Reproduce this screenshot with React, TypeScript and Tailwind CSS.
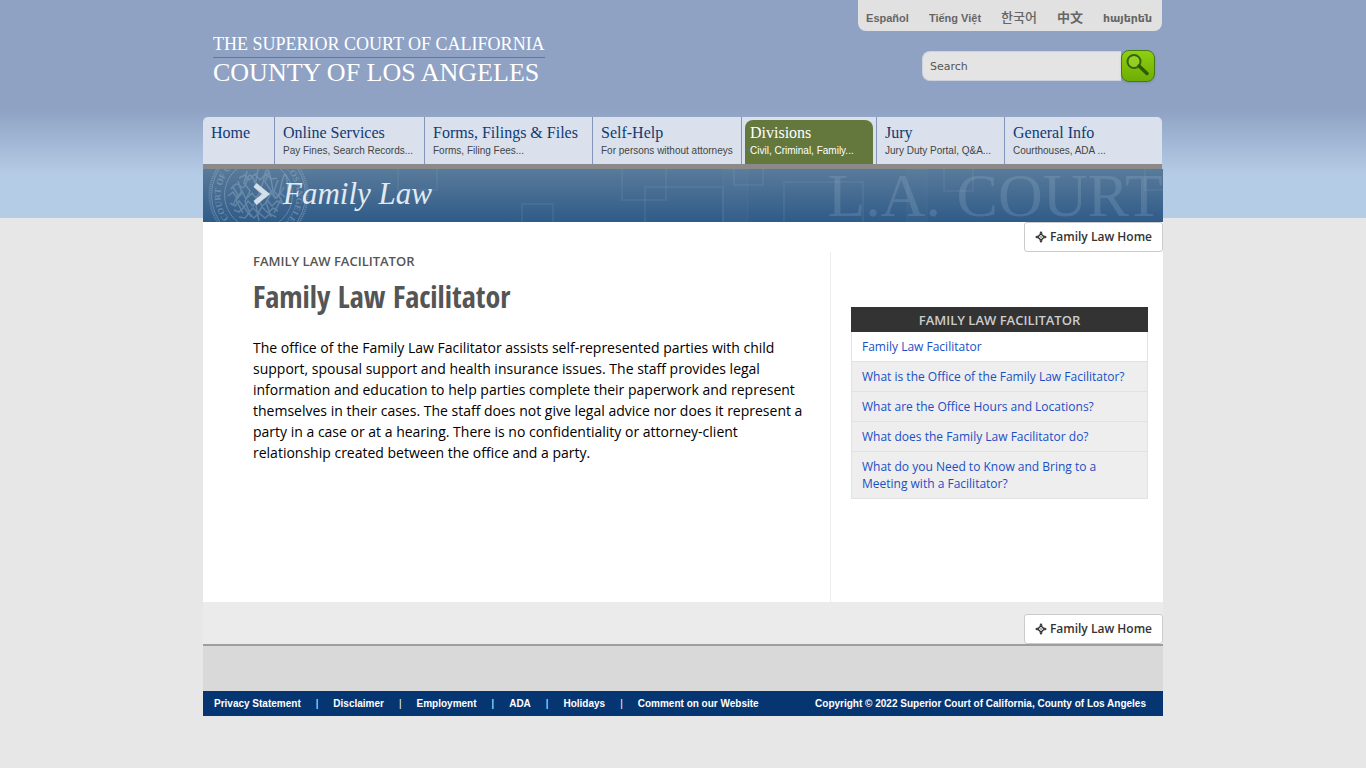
const languages = [
  { label: "Español", lang: "es", style: "text-[11px]" },
  { label: "Tiếng Việt", lang: "vi", style: "text-[11px]" },
  { label: "한국어", lang: "ko", style: "text-[13px] font-medium" },
  { label: "中文", lang: "zh", style: "text-[13px]" },
  { label: "հայերեն", lang: "hy", style: "text-[11px]" },
];

type NavItem = {
  title: string;
  note?: string;
  width: string;
  active?: boolean;
};

const navItems: NavItem[] = [
  { title: "Home", width: "w-[72px]" },
  { title: "Online Services", note: "Pay Fines, Search Records...", width: "w-[150px]" },
  { title: "Forms, Filings & Files", note: "Forms, Filing Fees...", width: "w-[168px]" },
  { title: "Self-Help", note: "For persons without attorneys", width: "w-[149px]" },
  { title: "Divisions", note: "Civil, Criminal, Family...", width: "w-[135px]", active: true },
  { title: "Jury", note: "Jury Duty Portal, Q&A...", width: "w-[128px]" },
  { title: "General Info", note: "Courthouses, ADA ...", width: "flex-1" },
];

const sideLinks = [
  "Family Law Facilitator",
  "What is the Office of the Family Law Facilitator?",
  "What are the Office Hours and Locations?",
  "What does the Family Law Facilitator do?",
  "What do you Need to Know and Bring to a Meeting with a Facilitator?",
];

const footerLinks = [
  "Privacy Statement",
  "Disclaimer",
  "Employment",
  "ADA",
  "Holidays",
  "Comment on our Website",
];

function SearchIcon() {
  return (
    <svg viewBox="0 0 34 32" className="h-8 w-[34px] shrink-0" aria-hidden="true">
      <circle cx="13" cy="11.500" r="6.500" fill="#a5da3a" fillOpacity="0.5" stroke="#356210" strokeWidth="2" />
      <path d="M18 16 L26 23.500" stroke="#2f5a0c" strokeWidth="3.500" strokeLinecap="round" />
    </svg>
  );
}

function CompassIcon() {
  return (
    <svg viewBox="0 0 12 12" className="h-3 w-3" fill="none" stroke="#333" aria-hidden="true">
      <path d="M6 2.800 L9.200 6 L6 9.200 L2.800 6 Z" strokeWidth="1.400" />
      <path d="M6 0 L7.800 2.600 H4.200 Z M12 6 L9.400 7.800 V4.200 Z M6 12 L4.200 9.400 H7.800 Z M0 6 L2.600 4.200 V7.800 Z" fill="#333" stroke="none" />
      <circle cx="6" cy="6" r="0.700" fill="#333" stroke="none" />
    </svg>
  );
}

function CourtSeal() {
  return (
    <svg viewBox="0 0 110 53" className="h-[53px] w-[110px]" fill="none" stroke="#a9c0d4" aria-hidden="true">
      <defs>
        <path id="seal-rim" d="M55.500 64 A38 38 0 1 1 55.600 64" />
      </defs>
      <g opacity="0.4">
        <circle cx="55.500" cy="26" r="49" strokeWidth="2" strokeDasharray="1 1" />
        <circle cx="55.500" cy="26" r="47" strokeWidth="1" />
        <circle cx="55.500" cy="26" r="34" strokeWidth="1" />
        <text fontSize="9" fontWeight="bold" fill="#a9c0d4" stroke="none" fontFamily="Liberation Serif, serif">
          <textPath href="#seal-rim" startOffset="34">
            COURT OF CALIFORNIA • LOS ANGELES
          </textPath>
        </text>
      </g>
      <g opacity="0.35" strokeWidth="1.500">
        <path d="M28 20 q5 -8 9 -3 t7 -6 t8 3 t9 -5 t8 7 t9 1 t7 5" />
        <path d="M25 27 l5 -4 l4 6 l5 -7 l4 8 l6 -6 l4 5 l5 -7 l4 7 l6 -6 l4 6 l5 -5 l5 4" />
        <path d="M27 34 l5 3 l4 -5 l5 6 l4 -6 l5 5 l5 -7 l4 7 l6 -5 l4 5 l5 -5 l6 3" />
        <path d="M31 41 l5 2 l5 -5 l4 6 l5 -5 l5 5 l4 -6 l6 6 l5 -5 l5 3" />
        <path d="M36 48 l6 1 l4 -5 l5 5 l5 -5 l6 5 l5 -4 l6 3" />
        <path d="M36 9 l6 -3 l4 5 l6 -6 l5 6 l6 -6 l5 5 l6 -1" />
        <path d="M44 2 L41 14 L47 22 L42 32 L48 48 M66 2 L62 13 L69 23 L63 33 L68 48 M55 0 L52 17 L58 26 L53 37 L56 52" />
        <path d="M35 12 L39 24 L33 31 L40 44 M75 11 L71 22 L78 30 L71 44 M30 18 L35 26 L30 36 M81 18 L76 27 L81 36" />
      </g>
    </svg>
  );
}

function BannerSquares() {
  return (
    <svg viewBox="0 0 960 53" className="h-[53px] w-[960px]" fill="none" stroke="#9db8cd" strokeOpacity="0.1" strokeWidth="2" aria-hidden="true">
      <path d="M195 0 V21 H234 V0 M419 -2 V31 H463 V-2 M531 -2 V16 H560 V-2 M942 -2 V21 H966 M741 -2 V22 H770 V-2" />
      <path d="M319 54 V35 H350 V54 M442 54 V18 H520 V54 M581 54 V13 H660 V54" />
      <path d="M520 0 H545 V53 H520 Z M704 0 H724 V53 H704 Z" fill="#9db8cd" fillOpacity="0.04" strokeOpacity="0.04" />
    </svg>
  );
}

function HomeButton() {
  return (
    <a
      href="#"
      className="flex h-[30px] items-center gap-[3px] rounded-[3px] border border-[#ccc] bg-white px-2.5 font-['Open_Sans',sans-serif] text-xs font-semibold text-[#333]"
    >
      <CompassIcon />
      Family Law Home
    </a>
  );
}

function Header() {
  return (
    <header className="flex h-[117px] justify-between">
      <a href="#" className="mt-[34px] ml-2.5 self-start whitespace-nowrap font-['Liberation_Serif',serif] text-white">
        <span className="block border-b border-[#6070c8] pb-[3px] text-[18px] leading-5">
          THE SUPERIOR COURT OF CALIFORNIA
        </span>
        <span className="block text-[26px] leading-[29px]">COUNTY OF LOS ANGELES</span>
      </a>
      <div className="flex flex-col items-end">
        <ul className="mr-px flex h-[31px] items-center gap-5 rounded-b-lg bg-[#e1e1e1] pt-1 pr-2.5 pl-2 font-['Liberation_Sans','DejaVu_Sans','Noto_Sans_CJK_KR',sans-serif] font-bold whitespace-nowrap text-[#666]">
          {languages.map((item) => (
            <li key={item.lang} className="flex">
              <a href="#" lang={item.lang} className={`${item.style} leading-5`}>
                {item.label}
              </a>
            </li>
          ))}
        </ul>
        <form className="mt-[19px] mr-2 flex items-center" onSubmit={(event) => event.preventDefault()}>
          <input
            type="text"
            aria-label="Search"
            placeholder="Search"
            className="h-[30px] w-[199px] rounded-l-lg border border-r-0 border-[#ccd2de] bg-[#e4e4e4] px-[7px] font-['DejaVu_Sans',sans-serif] text-[11px] text-[#555] outline-none placeholder:text-[#555]"
          />
          <button
            type="submit"
            aria-label="Submit search"
            className="flex h-8 w-[34px] items-center justify-center rounded-lg border border-[#437b12] bg-linear-to-b from-[#8fd010] to-[#6ead05] shadow-sm"
          >
            <SearchIcon />
          </button>
        </form>
      </div>
    </header>
  );
}

function MainNav() {
  return (
    <nav className="mr-px border-b-[5px] border-[#8b8989]">
      <ul className="flex h-[47px] overflow-hidden rounded-t-[5px] bg-[#dae1ec] whitespace-nowrap">
        {navItems.map((item) => (
          <li
            key={item.title}
            className={`${item.width} flex border-r border-[#8296bb] last:border-r-0 ${item.active ? "px-[3px] pt-[3px]" : ""}`}
          >
            <a
              href="#"
              className={
                item.active
                  ? "flex-1 rounded-t-lg bg-[#64783e] pt-[3px] pl-[5px] text-white"
                  : "flex-1 pt-1.5 pl-2 text-[#0f3a74]"
              }
            >
              <span className="block font-['Liberation_Serif',serif] text-base leading-5">{item.title}</span>
              {item.note && (
                <span
                  className={`block font-['Liberation_Sans',sans-serif] text-[10px] leading-4 ${item.active ? "text-white" : "text-[#444]"}`}
                >
                  {item.note}
                </span>
              )}
            </a>
          </li>
        ))}
      </ul>
    </nav>
  );
}

function SectionBanner() {
  return (
    <div className="relative h-[53px] overflow-hidden bg-linear-to-b from-[#597b9b] to-[#2f5b88]">
      <div className="absolute inset-0">
        <BannerSquares />
      </div>
      <div className="absolute top-0 left-0">
        <CourtSeal />
      </div>
      <div
        aria-hidden="true"
        className="absolute top-0 right-0 font-['Liberation_Serif',serif] text-[62px] leading-[52px] whitespace-nowrap text-[#a9c4d8]/20"
      >
        L.A. COURT
      </div>
      <div className="relative flex h-[50px] items-center gap-3 pl-[50px]">
        <svg viewBox="0 0 18 22" className="h-[22px] w-[18px]" fill="none" stroke="#d3dfe9" strokeWidth="5" aria-hidden="true">
          <path d="M2 2 L13 11 L2 20" />
        </svg>
        <p className="font-['Liberation_Serif',serif] text-[31px] leading-9 text-[#e2eaf1] italic">Family Law</p>
      </div>
    </div>
  );
}

function Sidebar() {
  return (
    <aside className="w-[333px] shrink-0 border-l border-[#eee] pt-[55px] pr-[15px] pl-5 font-['Open_Sans',sans-serif]">
      <h2 className="bg-[#333] pt-px text-center text-[13px] leading-6 font-semibold text-[#ccc]">
        FAMILY LAW FACILITATOR
      </h2>
      <ul className="border-x border-[#e2e2e2] bg-[#eee] text-xs leading-[17px]">
        {sideLinks.map((label) => (
          <li key={label} className="border-b border-[#e2e2e2] py-1.5 pr-8 pl-2.5 whitespace-nowrap first:bg-white last:whitespace-normal">
            <a href="#" className="text-[#1a4fc4]">
              {label}
            </a>
          </li>
        ))}
      </ul>
    </aside>
  );
}

function Footer() {
  return (
    <footer className="font-['Liberation_Sans',sans-serif] text-[10px] font-bold">
      <div className="h-[47px] border-t-2 border-[#9e9e9e] bg-[#d9d9d9]" />
      <div className="flex h-[25px] items-center justify-between bg-[#053672] pr-[17px] pl-[11px] whitespace-nowrap text-white">
        <ul className="flex">
          {footerLinks.map((label, index) => (
            <li key={label} className="flex">
              {index > 0 && <span className="px-[15px] font-normal">|</span>}
              <a href="#">{label}</a>
            </li>
          ))}
        </ul>
        <p>Copyright © 2022 Superior Court of California, County of Los Angeles</p>
      </div>
    </footer>
  );
}

export default function App() {
  return (
    <div className="min-h-screen bg-[#e7e7e7] bg-[linear-gradient(#8fa2c4_0,#8fa2c4_110px,#b5cce6_175px,#b5cce6_218px,#e7e7e7_218px)] pb-12">
      <div className="mx-auto max-w-[960px]">
        <Header />
        <MainNav />
        <SectionBanner />
        <main className="bg-white">
          <div className="flex justify-end">
            <HomeButton />
          </div>
          <div className="flex min-h-[350px]">
            <article className="flex-1 pr-6 pl-[50px] font-['Open_Sans',sans-serif]">
              <p className="text-[13px] leading-[18px] font-semibold text-[#555]">FAMILY LAW FACILITATOR</p>
              <h1 className="mt-1.5 font-['Open_Sans_Condensed','Open_Sans',sans-serif] text-[30px] leading-[42px] font-bold text-[#555]">
                Family Law Facilitator
              </h1>
              <p className="mt-[19px] text-sm leading-[21px] text-black">
                The office of the Family Law Facilitator assists self-represented parties with child support, spousal
                support and health insurance issues. The staff provides legal information and education to help parties
                complete their paperwork and represent themselves in their cases. The staff does not give legal advice
                nor does it represent a party in a case or at a hearing. There is no confidentiality or attorney-client
                relationship created between the office and a party.
              </p>
            </article>
            <Sidebar />
          </div>
          <div className="flex justify-end bg-[#ebebeb] pt-3">
            <HomeButton />
          </div>
        </main>
        <Footer />
      </div>
    </div>
  );
}
